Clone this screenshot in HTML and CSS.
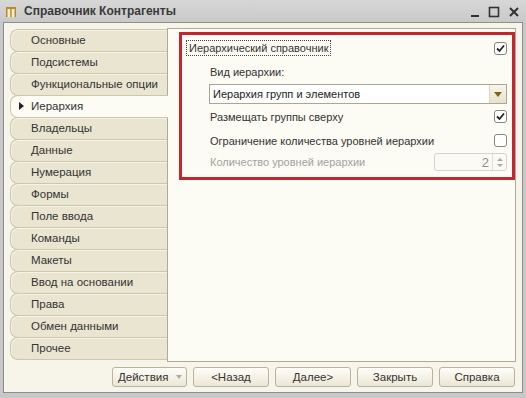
FILE: index.html
```html
<!doctype html>
<html lang="ru">
<head>
  <meta charset="utf-8">
  <title>Справочник Контрагенты</title>
  <link rel="stylesheet" href="styles.css">
</head>
<body>
  <div class="window">
    <div class="titlebar">
      <svg class="title-icon" width="10" height="10" viewBox="0 0 10 10">
        <rect x="0" y="0" width="10" height="2" fill="#b98a2c"/>
        <rect x="0" y="2" width="10" height="8" fill="#f3ecd0"/>
        <rect x="0" y="2" width="1.5" height="8" fill="#b98a2c"/>
        <rect x="4.2" y="2" width="1.5" height="8" fill="#b98a2c"/>
        <rect x="8.5" y="2" width="1.5" height="8" fill="#b98a2c"/>
      </svg>
      <span class="title">Справочник Контрагенты</span>
      <div class="controls">
        <svg width="10" height="12" viewBox="0 0 10 12"><rect x="1" y="9" width="8" height="2" fill="#333"/></svg>
        <svg width="12" height="12" viewBox="0 0 12 12"><rect x="1.5" y="1.5" width="9" height="9" fill="none" stroke="#333" stroke-width="1.6"/></svg>
        <svg width="12" height="12" viewBox="0 0 12 12"><path d="M2 2 L10 10 M10 2 L2 10" stroke="#333" stroke-width="2"/></svg>
      </div>
    </div>

    <div class="client">
      <div class="main">
        <ul class="tabs">
          <li class="tab">Основные</li>
          <li class="tab">Подсистемы</li>
          <li class="tab">Функциональные опции</li>
          <li class="tab active">Иерархия</li>
          <li class="tab">Владельцы</li>
          <li class="tab">Данные</li>
          <li class="tab">Нумерация</li>
          <li class="tab">Формы</li>
          <li class="tab">Поле ввода</li>
          <li class="tab">Команды</li>
          <li class="tab">Макеты</li>
          <li class="tab">Ввод на основании</li>
          <li class="tab">Права</li>
          <li class="tab">Обмен данными</li>
          <li class="tab">Прочее</li>
        </ul>

        <div class="panel">
          <div class="highlight">
            <div class="row r1">
              <span class="focus">Иерархический справочник</span>
              <span class="checkbox checked">
                <svg width="9" height="9" viewBox="0 0 9 9"><path d="M1 4.5 L3.5 7 L8 1.5" fill="none" stroke="#222" stroke-width="1.8"/></svg>
              </span>
            </div>
            <div class="row r2 nested">
              <span>Вид иерархии:</span>
            </div>
            <div class="row r3 nested">
              <div class="select">
                <span class="select-value">Иерархия групп и элементов</span>
                <span class="select-btn"><span class="arrow"></span></span>
              </div>
            </div>
            <div class="row r4 nested">
              <span>Размещать группы сверху</span>
              <span class="checkbox checked">
                <svg width="9" height="9" viewBox="0 0 9 9"><path d="M1 4.5 L3.5 7 L8 1.5" fill="none" stroke="#222" stroke-width="1.8"/></svg>
              </span>
            </div>
            <div class="row r5 nested">
              <span>Ограничение количества уровней иерархии</span>
              <span class="checkbox"></span>
            </div>
            <div class="row r6 nested disabled">
              <span>Количество уровней иерархии</span>
              <div class="spin">
                <span class="spin-value">2</span>
                <span class="spin-btns">
                  <span class="spin-up"></span>
                  <span class="spin-down"></span>
                </span>
              </div>
            </div>
          </div>
        </div>
      </div>

      <div class="buttons">
        <div class="btn actions"><span class="btn-text">Действия</span><span class="btn-drop"></span></div>
        <div class="btn">&lt;Назад</div>
        <div class="btn">Далее&gt;</div>
        <div class="btn">Закрыть</div>
        <div class="btn">Справка</div>
      </div>
    </div>
  </div>
</body>
</html>
```

FILE: styles.css
```css
body {
  margin: 0;
  font-family: "Liberation Sans", Arial, sans-serif;
  font-size: 12px;
  color: #333;
}

.window {
  width: 526px;
  height: 398px;
  background: #c8c8c8;
  display: flex;
  flex-direction: column;
  box-sizing: border-box;
}

.titlebar {
  height: 22px;
  display: flex;
  align-items: center;
  padding: 0 6px 0 6px;
  background: linear-gradient(#d7d7d7, #c9c9c9);
}

.title-icon {
  margin-top: 2px;
}

.title {
  margin-left: 8px;
  font-weight: bold;
  color: #3a3a3a;
}

.controls {
  margin-left: auto;
  display: flex;
  gap: 8px;
  align-items: center;
  margin-top: 2px;
}

.client {
  flex: 1;
  margin: 0 3px 5px 3px;
  border: 1px solid #8d8d8d;
  background: #f7f5ea;
  padding: 5px 6px 0 6px;
  display: flex;
  flex-direction: column;
}

.main {
  display: flex;
  height: 334px;
}

.tabs {
  list-style: none;
  margin: 0;
  padding: 1px 0 0 0;
  width: 157px;
  font-size: 11.5px;
}

.tab {
  box-sizing: border-box;
  height: 23px;
  line-height: 21px;
  margin-top: -1px;
  padding-left: 20px;
  border: 1px solid #ccc6aa;
  border-right: none;
  border-radius: 8px 0 0 8px;
  background: #e9e5d0;
  box-shadow: inset 1px 1px 0 #f6f3e4;
  position: relative;
}

.tab:first-child {
  margin-top: 0;
}

.tab.active {
  background: #fcfbf4;
  box-shadow: none;
  margin-right: -1px;
  z-index: 1;
}

.tab.active::before {
  content: "";
  position: absolute;
  left: 8px;
  top: 6px;
  border-left: 5px solid #222;
  border-top: 4px solid transparent;
  border-bottom: 4px solid transparent;
}

.panel {
  flex: 1;
  border: 1px solid #aca99d;
  background: #fcfbf4;
  padding: 3px 0 0 11px;
  font-size: 11px;
}

.highlight {
  border: 3px solid #c5252d;
  padding: 1px 5px 5px 4px;
}

.row {
  display: flex;
  align-items: center;
  justify-content: space-between;
}

.nested {
  padding-left: 24px;
}

.r1 { height: 24px; }
.r2 { height: 24px; }
.r3 { height: 20px; }
.r4 { height: 25px; }
.r5 { height: 23px; }
.r6 { height: 20px; }

.focus {
  border: 1px dotted #444;
  padding: 0 2px;
  line-height: 14px;
}

.checkbox {
  box-sizing: border-box;
  width: 13px;
  height: 13px;
  border: 1px solid #858585;
  border-radius: 3px;
  background: #fff;
  display: flex;
  align-items: center;
  justify-content: center;
}

.select {
  flex: 1;
  height: 20px;
  box-sizing: border-box;
  border: 1px solid #aaa694;
  background: #fff;
  display: flex;
  align-items: center;
  margin-left: -1px;
}

.select-value {
  flex: 1;
  padding-left: 3px;
  color: #222;
}

.select-btn {
  width: 16px;
  height: 100%;
  border-left: 1px solid #dcd8c6;
  background: linear-gradient(#f8f6ec, #e7e2cc);
  display: flex;
  align-items: center;
  justify-content: center;
}

.arrow {
  border-top: 5px solid #7a6518;
  border-left: 4px solid transparent;
  border-right: 4px solid transparent;
}

.disabled {
  color: #a3a3a0;
}

.spin {
  width: 73px;
  height: 18px;
  box-sizing: border-box;
  border: 1px solid #d6d4ca;
  border-radius: 3px;
  background: #fbfaf5;
  display: flex;
  align-items: center;
}

.spin-value {
  flex: 1;
  text-align: right;
  padding-right: 3px;
  font-size: 13px;
  color: #8f8f8c;
}

.spin-btns {
  width: 13px;
  height: 100%;
  border-left: 1px solid #e0ded4;
  display: flex;
  flex-direction: column;
  align-items: center;
  justify-content: center;
  gap: 3px;
}

.spin-up {
  border-bottom: 3px solid #aaa;
  border-left: 3px solid transparent;
  border-right: 3px solid transparent;
}

.spin-down {
  border-top: 3px solid #aaa;
  border-left: 3px solid transparent;
  border-right: 3px solid transparent;
}

.buttons {
  display: flex;
  justify-content: flex-end;
  gap: 6px;
  margin-top: 5px;
  padding-right: 1px;
  font-size: 11.5px;
}

.btn {
  width: 76px;
  height: 20px;
  box-sizing: border-box;
  border: 1px solid #b8b39d;
  border-radius: 3px;
  background: linear-gradient(#fefdf8, #ebe7d5);
  display: flex;
  align-items: center;
  justify-content: center;
  color: #333;
}

.btn.actions {
  width: 75px;
  justify-content: space-between;
  padding: 0 4px 0 5px;
}

.btn-drop {
  border-top: 4px solid #aaa;
  border-left: 3.5px solid transparent;
  border-right: 3.5px solid transparent;
}
```
